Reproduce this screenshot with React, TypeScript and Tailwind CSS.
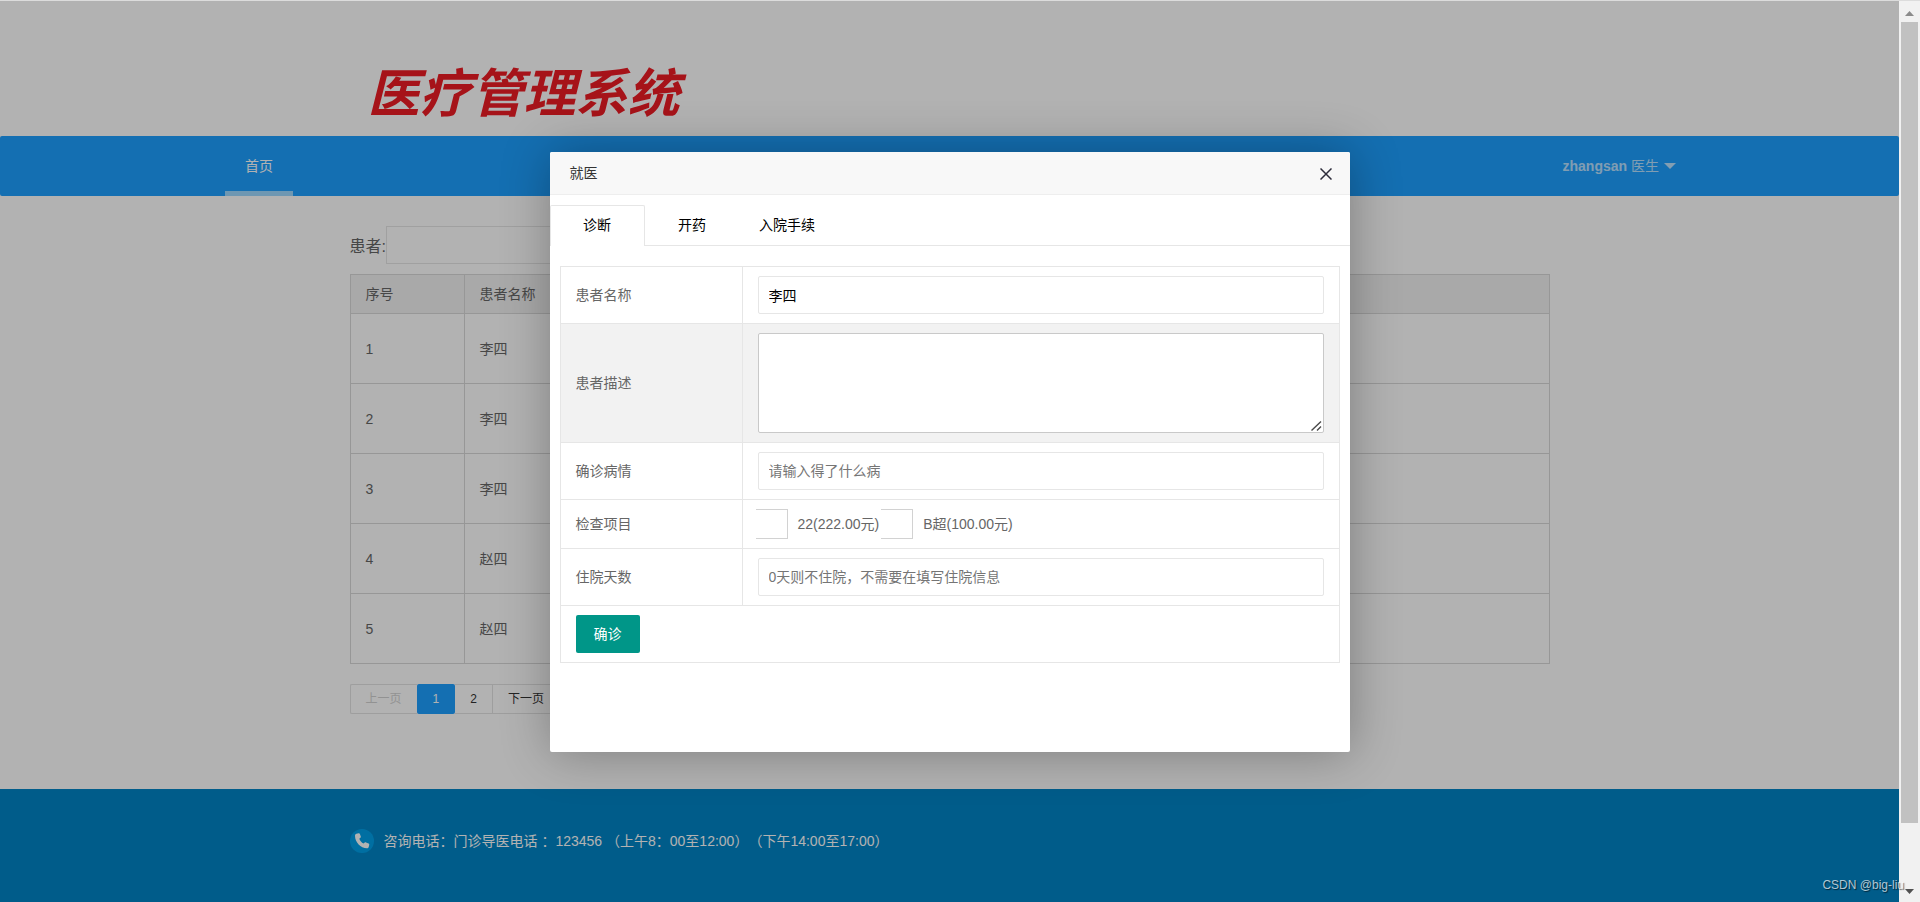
import { useState } from "react";

const patients = ["李四", "李四", "李四", "赵四", "赵四"];
const tabs = ["诊断", "开药", "入院手续"];
const checks = ["22(222.00元)", "B超(100.00元)"];

const cell = "border border-[#e6e6e6] px-[15px] py-[9px]";
const field =
  "block h-[38px] w-full rounded-xs border border-[#e6e6e6] bg-white px-2.5 text-sm text-black outline-none placeholder:text-[#757575]";

function PageHeader() {
  return (
    <header>
      <div className="mx-auto flex h-[135px] max-w-[1200px] items-end px-[18px] pb-3">
        <h1 className="text-[52px] leading-[60px] font-bold text-[#ee1c25] italic">医疗管理系统</h1>
      </div>
      <nav className="flex h-[60px] items-stretch justify-between rounded-xs bg-[#1e9fff] px-[225px] text-sm text-white">
        <a href="#" className="flex items-center border-b-5 border-[#9ed8ff] px-5 pt-[5px]">
          首页
        </a>
        <a href="#" className="-mr-0.5 flex items-center gap-[5px] text-white/70">
          <span>
            <b>zhangsan</b> 医生
          </span>
          <svg className="h-1.5 w-3" viewBox="0 0 12 6" fill="currentColor" aria-hidden="true">
            <path d="M0 0h12L6 6z" />
          </svg>
        </a>
      </nav>
    </header>
  );
}

function PatientList() {
  return (
    <main className="mx-auto w-full max-w-[1200px] pt-[30px]">
      <div className="flex items-center text-base text-[#666]">
        <label htmlFor="patient" className="pt-1">
          患者:
        </label>
        <input id="patient" className="h-[38px] w-48 border border-[#e6e6e6] px-2.5 outline-none" />
      </div>
      <table className="mt-2.5 w-full table-fixed border-collapse text-sm text-[#666]">
        <thead>
          <tr className="h-[39px] bg-[#f2f2f2] text-left">
            <th className="w-[114px] border border-[#d8d8d8] px-[15px] font-normal">序号</th>
            <th className="border border-[#d8d8d8] px-[15px] font-normal">患者名称</th>
          </tr>
        </thead>
        <tbody>
          {patients.map((name, i) => (
            <tr key={i} className="h-[70px]">
              <td className="border border-[#d8d8d8] px-[15px]">{i + 1}</td>
              <td className="border border-[#d8d8d8] px-[15px]">{name}</td>
            </tr>
          ))}
        </tbody>
      </table>
      <div className="mt-5 flex h-[30px] text-xs text-[#333]">
        <button className="rounded-l-xs border border-r-0 border-[#e2e2e2] px-[15px] text-[#d2d2d2]">上一页</button>
        <button className="rounded-xs bg-[#1e9fff] px-4 text-white">1</button>
        <button className="border-y border-r border-[#e2e2e2] px-[15px]">2</button>
        <button className="border-y border-r border-[#e2e2e2] px-[15px]">下一页</button>
      </div>
    </main>
  );
}

function PageFooter() {
  return (
    <footer className="mt-[75px] flex-1 bg-[#0084c6] pt-10 text-sm text-white">
      <div className="mx-auto flex max-w-[1200px] items-center gap-2.5">
        <svg className="size-6" viewBox="0 0 24 24" aria-hidden="true">
          <circle cx="12" cy="12" r="12" fill="#00a0e9" />
          <path
            d="M6.400 4.800 8.600 4.200c.6-.2 1.100.1 1.300.7l.9 2.600c.2.500 0 1-.4 1.300l-1.100.9c.8 2.200 2.200 3.800 4.300 4.900l1.100-1c.4-.3.9-.4 1.300-.2l2.600 1.200c.5.2.8.8.6 1.300l-.5 2c-.2.800-.9 1.300-1.800 1.300C10.700 19.200 5 13.300 5 6.700c0-.9.600-1.700 1.400-1.900z"
            fill="#fff"
          />
        </svg>
        <p className="[text-spacing-trim:space-all]">
          咨询电话：门诊导医电话 ：123456 （上午8：00至12:00）（下午14:00至17:00）
        </p>
      </div>
    </footer>
  );
}

function VisitDialog() {
  const [tab, setTab] = useState(0);
  return (
    <section
      role="dialog"
      aria-label="就医"
      className="flex h-[600px] w-[800px] flex-col rounded-xs bg-white shadow-[1px_1px_50px_rgba(0,0,0,0.3)]"
    >
      <header className="flex h-[43px] items-center justify-between rounded-t-xs border-b border-[#eee] bg-[#f8f8f8] px-5 text-sm text-[#333]">
        <h2>就医</h2>
        <button aria-label="关闭" className="-mr-0.5 pt-0.5">
          <svg className="size-3" viewBox="0 0 12 12" stroke="#2d2c3b" strokeWidth="1.5" aria-hidden="true">
            <path d="M.5.5l11 11M11.500.500l-11 11" />
          </svg>
        </button>
      </header>
      <div role="tablist" className="mt-2.5 flex h-[41px] border-b border-[#e6e6e6] text-sm text-black">
        {tabs.map((name, i) => (
          <button
            key={name}
            role="tab"
            aria-selected={i === tab}
            onClick={() => setTab(i)}
            className={
              i === tab
                ? "-mb-px w-[95px] rounded-t-xs border border-b-0 border-[#e6e6e6] bg-white pb-[3px]"
                : "w-[95px]"
            }
          >
            {name}
          </button>
        ))}
      </div>
      <form className="px-2.5 pt-5" onSubmit={(e) => e.preventDefault()}>
        <table className="w-full table-fixed border-collapse text-sm leading-5 text-[#666]">
          <tbody>
            <tr>
              <td className={`${cell} w-[182px]`}>
                <label htmlFor="name">患者名称</label>
              </td>
              <td className={cell}>
                <input id="name" className={field} defaultValue="李四" />
              </td>
            </tr>
            <tr className="bg-[#f2f2f2]">
              <td className={cell}>
                <label htmlFor="desc">患者描述</label>
              </td>
              <td className={cell}>
                <div className="relative">
                  <textarea
                    id="desc"
                    className="block h-[100px] w-full resize-none rounded-xs border border-[#c9c9c9] bg-white px-2.5 py-1.5 outline-none"
                  />
                  <svg
                    className="pointer-events-none absolute right-0.5 bottom-0.5 h-2.5 w-[11px]"
                    viewBox="0 0 11 10"
                    fill="none"
                    stroke="#4a4a4a"
                    strokeWidth="1.4"
                    aria-hidden="true"
                  >
                    <path d="M.5 9.500 10 .5M6 9.500l4-4" />
                  </svg>
                </div>
              </td>
            </tr>
            <tr>
              <td className={cell}>
                <label htmlFor="illness">确诊病情</label>
              </td>
              <td className={cell}>
                <input id="illness" className={field} placeholder="请输入得了什么病" />
              </td>
            </tr>
            <tr>
              <td className={cell}>检查项目</td>
              <td className={cell}>
                <div className="-ml-0.5 flex gap-0.5">
                  {checks.map((name) => (
                    <label key={name} className="flex items-center gap-2.5">
                      <input
                        type="checkbox"
                        className="h-[30px] w-8 appearance-none border border-l-0 border-[#d2d2d2] bg-white"
                      />
                      {name}
                    </label>
                  ))}
                </div>
              </td>
            </tr>
            <tr>
              <td className={cell}>
                <label htmlFor="days">住院天数</label>
              </td>
              <td className={cell}>
                <input id="days" className={field} placeholder="0天则不住院，不需要在填写住院信息" />
              </td>
            </tr>
            <tr>
              <td className={cell} colSpan={2}>
                <button className="block h-[38px] rounded-xs bg-[#009688] px-[18px] text-white">确诊</button>
              </td>
            </tr>
          </tbody>
        </table>
      </form>
    </section>
  );
}

function ScrollTrack() {
  return (
    <div aria-hidden="true" className="flex w-[21px] flex-col items-center bg-[#f1f1f1] py-2">
      <svg className="mt-0.5 h-[5px] w-[9px]" viewBox="0 0 9 5" fill="#8b8b8b">
        <path d="M0 5h9L4.500 0z" />
      </svg>
      <div className="mt-1.5 h-[801px] w-[17px] bg-[#c1c1c1]" />
      <svg className="mt-auto h-[5px] w-[9px]" viewBox="0 0 9 5" fill="#505050">
        <path d="M0 0h9L4.500 5z" />
      </svg>
    </div>
  );
}

export default function App() {
  return (
    <div className="relative flex h-screen overflow-hidden border-t border-[#dcdcdc] bg-white font-['Liberation_Sans','Noto_Sans_CJK_SC',sans-serif]">
      <div className="relative flex flex-1 flex-col">
        <PageHeader />
        <PatientList />
        <PageFooter />
        <div className="absolute inset-0 flex items-center justify-center bg-black/30 pt-px">
          <VisitDialog />
        </div>
      </div>
      <ScrollTrack />
      <p className="absolute right-4 bottom-[9px] text-xs text-white/70 [text-shadow:1px_1px_1px_rgba(0,0,0,0.6)]">
        CSDN @big-liu
      </p>
    </div>
  );
}
